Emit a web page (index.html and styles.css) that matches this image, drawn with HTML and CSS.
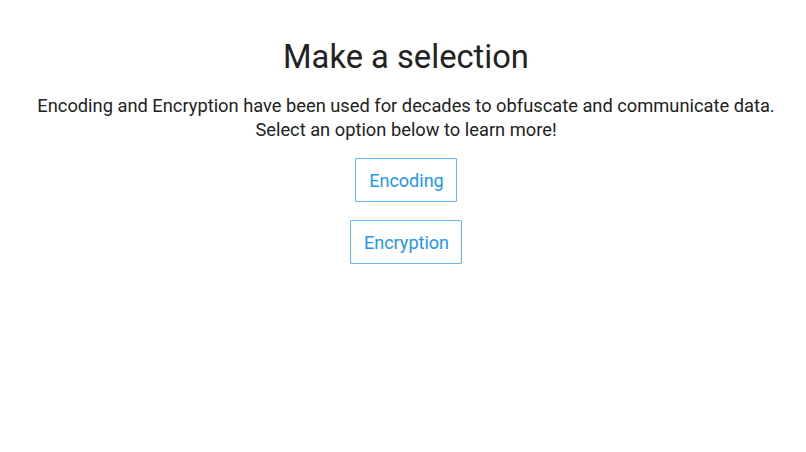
FILE: index.html
```html
<!DOCTYPE html>
<html>
<head>
<meta charset="utf-8">
<link rel="stylesheet" href="styles.css">
</head>
<body>
<main class="page">
  <h1 class="title">Make a selection</h1>
  <p class="intro">Encoding and Encryption have been used for decades to obfuscate and communicate data.<br>Select an option below to learn more!</p>
  <div class="options">
    <button class="option">Encoding</button>
    <button class="option">Encryption</button>
  </div>
</main>
</body>
</html>
```
FILE: styles.css
```css
html, body {
  margin: 0;
  padding: 0;
  background: #ffffff;
}
body {
  font-family: Roboto, "Noto Sans", sans-serif;
  color: #222222;
}
.page {
  display: flex;
  flex-direction: column;
  align-items: center;
  padding: 36px 0 0 6px;
  text-align: center;
}
.title {
  margin: 0;
  font-size: 32.7px;
  font-weight: 400;
  line-height: 42px;
}
.intro {
  margin: 16px 0 0;
  font-size: 18.3px;
  line-height: 24px;
}
.options {
  display: flex;
  flex-direction: column;
  align-items: center;
  gap: 18px;
  margin-top: 16px;
}
.option {
  font-family: Roboto, "Noto Sans", sans-serif;
  font-size: 18px;
  color: #2196f3;
  background: #fff;
  border: 1px solid #64b5f6;
  border-radius: 1px;
  height: 44px;
  padding: 0 12px 0 13px;
  cursor: pointer;
}
```
